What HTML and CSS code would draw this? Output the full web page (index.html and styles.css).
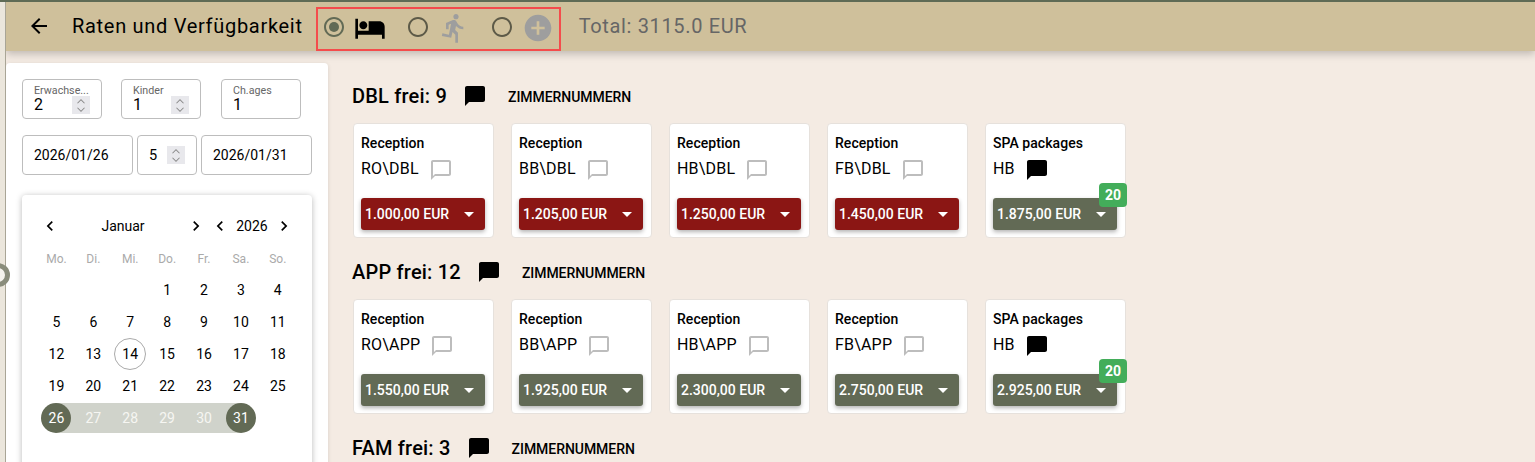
FILE: index.html
```html
<!DOCTYPE html>
<html lang="de">
<head>
<meta charset="utf-8">
<title>Raten und Verfügbarkeit</title>
<link rel="stylesheet" href="styles.css">
</head>
<body>
<svg class="defs" width="0" height="0" aria-hidden="true">
  <symbol id="i-chat" viewBox="0 0 24 24"><path d="M20 2H4c-1.1 0-2 .9-2 2v18l4-4h14c1.1 0 2-.9 2-2V4c0-1.1-.9-2-2-2z"/></symbol>
  <symbol id="i-chat-o" viewBox="0 0 24 24"><path d="M20 2H4c-1.1 0-2 .9-2 2v18l4-4h14c1.1 0 2-.9 2-2V4c0-1.1-.9-2-2-2zm0 14H6l-2 2V4h16v12z"/></symbol>
  <symbol id="i-radio" viewBox="0 0 24 24"><path d="M12 2C6.48 2 2 6.48 2 12s4.48 10 10 10 10-4.48 10-10S17.52 2 12 2zm0 18c-4.42 0-8-3.58-8-8s3.58-8 8-8 8 3.58 8 8-3.58 8-8 8z"/></symbol>
  <symbol id="i-left" viewBox="0 0 24 24"><path d="M15.41 7.41L14 6l-6 6 6 6 1.41-1.41L10.83 12z"/></symbol>
  <symbol id="i-right" viewBox="0 0 24 24"><path d="M10 6L8.59 7.41 13.17 12l-4.58 4.59L10 18l6-6z"/></symbol>
  <symbol id="i-up" viewBox="0 0 12 8"><path d="M2 6l4-4 4 4" fill="none" stroke="currentColor" stroke-width="1.2"/></symbol>
  <symbol id="i-down" viewBox="0 0 12 8"><path d="M2 2l4 4 4-4" fill="none" stroke="currentColor" stroke-width="1.2"/></symbol>
</svg>

<div class="page">
  <div class="rail"><span class="ring"></span></div>
  <div class="shell">
    <header class="topbar">
      <svg class="back" viewBox="0 0 24 24"><path d="M20 11H7.83l5.59-5.59L12 4l-8 8 8 8 1.41-1.41L7.83 13H20v-2z"/></svg>
      <h1 class="title">Raten und Verfügbarkeit</h1>
      <div class="modes">
        <svg class="radio radio-on" viewBox="0 0 24 24"><use href="#i-radio"/><circle cx="12" cy="12" r="5"/></svg>
        <svg class="mode-icon" viewBox="0 0 24 24"><path d="M7 13c1.66 0 3-1.34 3-3S8.66 7 7 7s-3 1.34-3 3 1.34 3 3 3zm12-6h-8v7H3V5H1v15h2v-3h18v3h2v-9c0-2.21-1.79-4-4-4z"/></svg>
        <svg class="radio" viewBox="0 0 24 24"><use href="#i-radio"/></svg>
        <svg class="mode-icon muted" viewBox="0 0 24 24"><path d="M13.49 5.48c1.1 0 2-.9 2-2s-.9-2-2-2-2 .9-2 2 .9 2 2 2zm-3.6 13.9l1-4.4 2.1 2v6h2v-7.5l-2.1-2 .6-3c1.3 1.5 3.3 2.5 5.5 2.5v-2c-1.9 0-3.5-1-4.3-2.4l-1-1.6c-.4-.6-1-1-1.7-1-.3 0-.5.1-.8.1l-5.2 2.2v4.7h2v-3.4l1.8-.7-1.6 8.1-4.9-1-.4 2 7 1.4z"/></svg>
        <svg class="radio" viewBox="0 0 24 24"><use href="#i-radio"/></svg>
        <svg class="mode-icon muted" viewBox="0 0 24 24"><path d="M12 2C6.48 2 2 6.48 2 12s4.48 10 10 10 10-4.48 10-10S17.52 2 12 2zm5 11h-4v4h-2v-4H7v-2h4V7h2v4h4v2z"/></svg>
      </div>
      <div class="total">Total: 3115.0 EUR</div>
    </header>

    <div class="body">
      <aside class="side">
        <div class="fields">
          <div class="field">
            <div class="flabel">Erwachse...</div>
            <div class="frow"><span class="fval">2</span><span class="step"><svg><use href="#i-up"/></svg><svg><use href="#i-down"/></svg></span></div>
          </div>
          <div class="field">
            <div class="flabel">Kinder</div>
            <div class="frow"><span class="fval">1</span><span class="step"><svg><use href="#i-up"/></svg><svg><use href="#i-down"/></svg></span></div>
          </div>
          <div class="field">
            <div class="flabel">Ch.ages</div>
            <div class="frow"><span class="fval">1</span></div>
          </div>
        </div>
        <div class="dates">
          <div class="dfield dfield-date">2026/01/26</div>
          <div class="dfield dfield-num"><span>5</span><span class="step"><svg><use href="#i-up"/></svg><svg><use href="#i-down"/></svg></span></div>
          <div class="dfield dfield-date">2026/01/31</div>
        </div>

        <div class="cal">
          <div class="cal-head">
            <svg class="chev"><use href="#i-left"/></svg>
            <span class="cal-month">Januar</span>
            <svg class="chev"><use href="#i-right"/></svg>
            <svg class="chev"><use href="#i-left"/></svg>
            <span class="cal-year">2026</span>
            <svg class="chev"><use href="#i-right"/></svg>
          </div>
          <div class="cal-week">
            <span>Mo.</span><span>Di.</span><span>Mi.</span><span>Do.</span><span>Fr.</span><span>Sa.</span><span>So.</span>
          </div>
          <div class="cal-days">
            <span class="d"></span><span class="d"></span><span class="d"></span>
            <span class="d"><b>1</b></span><span class="d"><b>2</b></span><span class="d"><b>3</b></span><span class="d"><b>4</b></span>
            <span class="d"><b>5</b></span><span class="d"><b>6</b></span><span class="d"><b>7</b></span><span class="d"><b>8</b></span><span class="d"><b>9</b></span><span class="d"><b>10</b></span><span class="d"><b>11</b></span>
            <span class="d"><b>12</b></span><span class="d"><b>13</b></span><span class="d today"><b>14</b></span><span class="d"><b>15</b></span><span class="d"><b>16</b></span><span class="d"><b>17</b></span><span class="d"><b>18</b></span>
            <span class="d"><b>19</b></span><span class="d"><b>20</b></span><span class="d"><b>21</b></span><span class="d"><b>22</b></span><span class="d"><b>23</b></span><span class="d"><b>24</b></span><span class="d"><b>25</b></span>
            <span class="d start"><b>26</b></span><span class="d range"><b>27</b></span><span class="d range"><b>28</b></span><span class="d range"><b>29</b></span><span class="d range"><b>30</b></span><span class="d end"><b>31</b></span>
          </div>
        </div>
      </aside>

      <main class="main">
        <section class="room">
          <div class="room-head">
            <h2 class="room-title">DBL frei: 9</h2>
            <svg class="ic-head"><use href="#i-chat"/></svg>
            <span class="room-link">ZIMMERNUMMERN</span>
          </div>
          <div class="rates">
            <div class="rate"><div class="rate-group">Reception</div><div class="rate-code"><span>RO\DBL</span><svg class="ic-note"><use href="#i-chat-o"/></svg></div><div class="price red"><span>1.000,00 EUR</span><i class="caret"></i></div></div>
            <div class="rate"><div class="rate-group">Reception</div><div class="rate-code"><span>BB\DBL</span><svg class="ic-note"><use href="#i-chat-o"/></svg></div><div class="price red"><span>1.205,00 EUR</span><i class="caret"></i></div></div>
            <div class="rate"><div class="rate-group">Reception</div><div class="rate-code"><span>HB\DBL</span><svg class="ic-note"><use href="#i-chat-o"/></svg></div><div class="price red"><span>1.250,00 EUR</span><i class="caret"></i></div></div>
            <div class="rate"><div class="rate-group">Reception</div><div class="rate-code"><span>FB\DBL</span><svg class="ic-note"><use href="#i-chat-o"/></svg></div><div class="price red"><span>1.450,00 EUR</span><i class="caret"></i></div></div>
            <div class="rate"><div class="rate-group">SPA packages</div><div class="rate-code"><span>HB</span><svg class="ic-note filled"><use href="#i-chat"/></svg></div><div class="price"><span>1.875,00 EUR</span><i class="caret"></i><em class="badge">20</em></div></div>
          </div>
        </section>

        <section class="room">
          <div class="room-head">
            <h2 class="room-title">APP frei: 12</h2>
            <svg class="ic-head"><use href="#i-chat"/></svg>
            <span class="room-link">ZIMMERNUMMERN</span>
          </div>
          <div class="rates">
            <div class="rate"><div class="rate-group">Reception</div><div class="rate-code"><span>RO\APP</span><svg class="ic-note"><use href="#i-chat-o"/></svg></div><div class="price"><span>1.550,00 EUR</span><i class="caret"></i></div></div>
            <div class="rate"><div class="rate-group">Reception</div><div class="rate-code"><span>BB\APP</span><svg class="ic-note"><use href="#i-chat-o"/></svg></div><div class="price"><span>1.925,00 EUR</span><i class="caret"></i></div></div>
            <div class="rate"><div class="rate-group">Reception</div><div class="rate-code"><span>HB\APP</span><svg class="ic-note"><use href="#i-chat-o"/></svg></div><div class="price"><span>2.300,00 EUR</span><i class="caret"></i></div></div>
            <div class="rate"><div class="rate-group">Reception</div><div class="rate-code"><span>FB\APP</span><svg class="ic-note"><use href="#i-chat-o"/></svg></div><div class="price"><span>2.750,00 EUR</span><i class="caret"></i></div></div>
            <div class="rate"><div class="rate-group">SPA packages</div><div class="rate-code"><span>HB</span><svg class="ic-note filled"><use href="#i-chat"/></svg></div><div class="price"><span>2.925,00 EUR</span><i class="caret"></i><em class="badge">20</em></div></div>
          </div>
        </section>

        <section class="room">
          <div class="room-head">
            <h2 class="room-title">FAM frei: 3</h2>
            <svg class="ic-head"><use href="#i-chat"/></svg>
            <span class="room-link">ZIMMERNUMMERN</span>
          </div>
        </section>
      </main>
    </div>
  </div>
</div>
</body>
</html>
```

FILE: styles.css
```css
* { box-sizing: border-box; }
html, body { margin: 0; padding: 0; height: 100%; overflow: hidden; }
body { background: #f4ebe3; font-family: Roboto, "Liberation Sans", sans-serif; color: #000; }
.defs { position: absolute; }

.page { display: flex; width: 1535px; height: 462px; overflow: hidden; border-top: 2px solid #5f6b55; position: relative; }
.rail { flex: 0 0 6px; background: #ebe6dc; border-right: 1px solid #a9a596; position: relative; z-index: 3; }
.ring { position: absolute; left: -14px; top: 261px; width: 24px; height: 24px; border-radius: 50%; border: 5px solid #8a8d7c; background: #f5f3ee; }
.shell { flex: 1; display: flex; flex-direction: column; min-width: 0; }

.topbar { flex: 0 0 49px; display: flex; align-items: center; padding-left: 21px; background: #cfc09b; box-shadow: 0 3px 8px rgba(0,0,0,.22); position: relative; z-index: 2; }
.back { width: 24px; height: 24px; flex: none; margin-top: -2px; }
.title { margin: -2px 0 0 21px; font-size: 20px; font-weight: 400; letter-spacing: .7px; line-height: 24px; white-space: nowrap; }
.modes { display: flex; align-items: center; align-self: flex-end; height: 44px; margin-left: 13px; padding: 0 5px 5px 4px; border: 2px solid #f44c4c; }
.radio { width: 24px; height: 24px; fill: #5d5a48; flex: none; }
.radio-on { fill: #626a55; }
.mode-icon { width: 32px; height: 32px; margin: 2px 20px 0 8px; flex: none; }
.mode-icon:last-child { margin-right: 0; }
.muted { fill: #9e9e9e; }
.total { margin: -2px 0 0 18px; font-size: 20px; letter-spacing: .65px; color: #666; white-space: nowrap; }

.body { flex: 1; display: flex; min-height: 0; }
.side { flex: 0 0 322px; height: 600px; margin-top: 12px; padding: 16px; background: #fff; border-radius: 4px; box-shadow: 0 1px 4px rgba(0,0,0,.12); }

.fields { display: flex; gap: 19px; }
.field { flex: 0 0 80px; min-width: 0; height: 40px; padding: 5px 11px 0 11px; border: 1px solid #bdbdbd; border-radius: 4px; }
.field:nth-child(3) { margin-left: 1px; }
.flabel { font-size: 10.7px; line-height: 12px; color: #666; white-space: nowrap; overflow: hidden; }
.frow { display: flex; justify-content: space-between; align-items: center; height: 18px; margin-top: -1px; }
.fval { font-size: 16px; line-height: 18px; }
.step { display: flex; flex-direction: column; align-items: center; justify-content: center; gap: 1px; width: 18px; height: 18px; background: #e8e8ec; color: #8a8a8a; flex: none; }
.step svg { width: 12px; height: 7px; display: block; }

.dates { display: flex; gap: 4px; margin-top: 16px; }
.dfield { height: 40px; border: 1px solid #bdbdbd; border-radius: 4px; font-size: 14px; display: flex; align-items: center; }
.dfield-date { flex: 0 0 111px; padding-left: 11px; }
.dfield-num { flex: 0 0 60px; padding: 0 11px; justify-content: space-between; font-size: 14.5px; }

.cal { margin-top: 20px; width: 290px; height: 400px; padding: 20px 16px; background: #fff; border-radius: 4px; box-shadow: 0 1px 6px rgba(0,0,0,.28); }
.cal-head { display: flex; align-items: center; height: 22px; font-size: 14px; }
.chev { width: 24px; height: 20px; flex: none; }
.cal-month { flex: 1; text-align: center; }
.cal-year { flex: 0 0 40px; text-align: center; }
.cal-week { display: grid; grid-template-columns: repeat(7, 36.9px); height: 30px; margin-top: 7px; align-items: center; text-align: center; font-size: 12px; color: #aaa; }
.cal-days { display: grid; grid-template-columns: repeat(7, 36.9px); grid-auto-rows: 32px; font-size: 14px; }
.d { display: flex; align-items: center; justify-content: center; height: 30px; margin: 1px 0; }
.d b { display: flex; align-items: center; justify-content: center; width: 30px; height: 30px; border-radius: 50%; font-weight: 400; flex: none; }
.today b { width: 32px; height: 32px; border: 1px solid #aaa; }
.range { background: #d0d3cb; color: #f6f6f2; }
.start { background: linear-gradient(to right, transparent 50%, #d0d3cb 50%); }
.end { background: linear-gradient(to right, #d0d3cb 50%, transparent 50%); }
.start b, .end b { background: #626a55; color: #fff; }

.main { flex: 1; padding: 33px 0 0 24px; min-width: 0; }
.room { height: 176px; }
.room-head { display: flex; align-items: center; height: 24px; }
.room-title { margin: 0; font-size: 20px; font-weight: 500; letter-spacing: .2px; line-height: 24px; white-space: nowrap; }
.ic-head { width: 24px; height: 24px; margin-left: 16px; flex: none; }
.room-link { margin: 2px 0 0 21px; font-size: 14px; font-weight: 500; letter-spacing: -.05px; white-space: nowrap; }

.rates { display: flex; gap: 17px; margin: 15px 0 0 1px; }
.rate { flex: 0 0 141px; height: 115px; padding: 9px 7px 7px; background: #fff; border: 1px solid #e6e1dc; border-radius: 4px; }
.rate-group { font-size: 14px; font-weight: 500; letter-spacing: .05px; line-height: 20px; white-space: nowrap; }
.rate-code { display: flex; align-items: center; height: 24px; margin-top: 3px; font-size: 16px; letter-spacing: .2px; }
.ic-note { width: 24px; height: 24px; margin: 4px 0 0 10px; fill: #bdbdbd; flex: none; }
.ic-note.filled { fill: #000; }
.price { position: relative; display: flex; align-items: center; justify-content: space-between; width: 124px; height: 32px; margin-top: 18px; padding: 0 11px 0 4px; background: #626a55; border-radius: 3px; color: #fff; font-size: 14px; font-weight: 500; box-shadow: 0 2px 4px rgba(0,0,0,.3); }
.price.red { background: #8b1614; }
.caret { width: 0; height: 0; border-left: 5px solid transparent; border-right: 5px solid transparent; border-top: 5px solid #fff; }
.badge { position: absolute; right: -10px; top: -15px; width: 28px; height: 24px; display: flex; align-items: center; justify-content: center; background: #43ad5a; border-radius: 4px; color: #fff; font-style: normal; font-weight: 700; font-size: 14px; }
```
